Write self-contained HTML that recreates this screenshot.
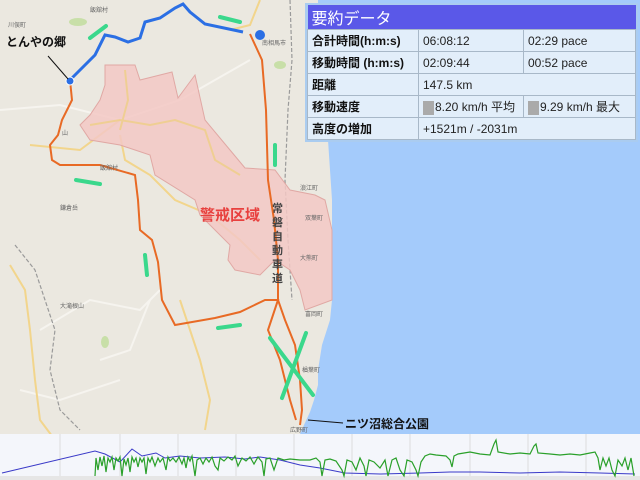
<!DOCTYPE html>
<html><head><meta charset="utf-8"><style>
html,body{margin:0;padding:0;width:640px;height:480px;overflow:hidden;background:#ebe8e0;font-family:"Liberation Sans","Noto Sans CJK JP",sans-serif}
#map{position:absolute;left:0;top:0}
#tbl{position:absolute;left:305px;top:3px;width:333px;height:139px;background:#aaccf0;}
table{position:absolute;left:2px;top:2px;border-collapse:collapse;width:329px;font-size:12px;}
td{border:1px solid #a8b8c8;background:#e2eefa;height:21px;padding:0 4px;color:#222;white-space:nowrap}
td.l{font-weight:bold;width:102px;color:#111}
.t{background:#5a58e8;color:#fff;font-size:16px;height:22px;font-weight:normal;border:none}
.g{display:inline-block;width:11px;height:14px;background:#aaa;vertical-align:middle;margin-right:1px}
</style></head><body>
<svg id="map" width="640" height="480" viewBox="0 0 640 480">
<rect width="640" height="480" fill="#ebe8e0"/>
<path d="M318,0 L640,0 L640,434 L300,434 L304,425 L310,412 L314,400 L318,385 L318,370 L322,345 L330,320 L332,300 L332,200 L328,140 L318,60 Z" fill="#a4cbfb"/>
<g fill="none" stroke="#f6f4ef" stroke-width="2">
<path d="M0,110 L60,105 L120,120 L180,100 L250,60"/>
<path d="M40,330 L90,300 L140,310 L160,290"/>
<path d="M100,360 L130,350 L150,300"/>
<path d="M20,390 L60,400 L120,380"/>
</g>
<g fill="none" stroke="#f2d58c" stroke-width="2">
<path d="M10,265 L25,290 L30,330 L35,380 L40,420 L55,440"/>
<path d="M120,135 L125,160 L150,175 L175,200 L210,215 L240,240 L260,260"/>
<path d="M30,145 L80,150 L120,120"/>
<path d="M180,300 L190,330 L200,360 L210,400 L205,430"/>
<path d="M230,30 L250,25 L260,0"/>
</g>
<g fill="none" stroke="#9a9a9a" stroke-width="1.2" stroke-dasharray="4,2">
<path d="M290,0 L292,60 L288,110 L285,180 L288,240 L292,300"/>
<path d="M15,245 L35,270 L45,300 L55,330 L50,370 L60,410 L80,430"/>
</g>
<path d="M105,65 L135,65 L140,80 L172,72 L178,98 L195,75 L205,120 L230,150 L245,168 L275,170 L290,190 L315,195 L325,200 L332,230 L332,300 L305,310 L300,290 L290,270 L275,260 L260,275 L235,270 L228,260 L230,245 L215,230 L200,215 L195,200 L155,175 L150,155 L120,145 L90,140 L80,125 L90,115 L100,100 L105,85 Z" fill="#f3c8c4" fill-opacity="0.85" stroke="#e0a8a4" stroke-width="1"/>
<g fill="none" stroke="#efcf86" stroke-width="2" opacity=".8">
<path d="M90,125 L120,120 L150,125 L175,120 L205,130 L215,160 L240,175"/>
<path d="M125,70 L128,100 L120,130"/>
</g>
<ellipse cx="78" cy="22" rx="9" ry="4" fill="#c8dfa8"/>
<ellipse cx="105" cy="342" rx="4" ry="6" fill="#c8dfa8"/>
<ellipse cx="280" cy="65" rx="6" ry="4" fill="#c8dfa8"/>
<path d="M250,34 L262,60 L266,110 L268,180 L274,220 L278,260 L278,300 L285,320 L295,345 L300,380 L302,410 L300,425" fill="none" stroke="#e86a25" stroke-width="2"/>
<path d="M70,80 L72,100 L62,120 L58,135 L50,145 L52,160 L60,165 L100,165 L135,175 L138,200 L140,230 L152,240 L158,262 L162,300 L175,325 L215,318 L240,312 L265,300 L278,300 L268,330 L280,360 L290,400 L296,420" fill="none" stroke="#e86a25" stroke-width="2"/>
<path d="M243,32 L205,24 L190,12 L183,4 L175,8 L160,18 L145,22 L140,38 L128,42 L115,37 L105,35 L95,55 L80,70 L70,80" fill="none" stroke="#2b6fe4" stroke-width="3"/>
<circle cx="70" cy="81" r="4" fill="#2b6fe4" stroke="#fff" stroke-width="1"/>
<circle cx="260" cy="35" r="5" fill="#2b6fe4"/>
<g stroke="#3ad88c" stroke-width="4" stroke-linecap="round" fill="#3ad88c">
<path d="M240,22 L220,17"/><path d="M106,26 L90,38"/><path d="M76,180 L100,184"/><path d="M275,165 L275,145"/>
<path d="M145,255 L147,275"/><path d="M218,328 L240,325"/><path d="M270,338 L313,395"/><path d="M282,398 L306,333"/>
</g>
<g font-size="6" fill="#666">
<text x="8" y="27">川俣町</text><text x="90" y="12">飯舘村</text><text x="262" y="45">南相馬市</text>
<text x="100" y="170">飯舘村</text><text x="60" y="210">鎌倉岳</text><text x="60" y="308">大滝根山</text>
<text x="300" y="190">浪江町</text><text x="305" y="220">双葉町</text><text x="300" y="260">大熊町</text>
<text x="305" y="316">富岡町</text><text x="302" y="372">楢葉町</text><text x="290" y="432">広野町</text><text x="62" y="135">山</text>
</g>
<text x="200" y="220" font-size="15" font-weight="bold" fill="#e8403e">警戒区域</text>
<text x="6" y="46" font-size="12" font-weight="bold" fill="#111">とんやの郷</text>
<line x1="48" y1="56" x2="68" y2="79" stroke="#111" stroke-width="1"/>
<text x="345" y="428" font-size="12" font-weight="bold" fill="#111">ニツ沼総合公園</text>
<line x1="308" y1="420" x2="343" y2="423" stroke="#111" stroke-width="1"/>
<g font-size="11" font-weight="bold" fill="#444"><text x="272" y="212">常</text><text x="272" y="226">磐</text><text x="272" y="240">自</text><text x="272" y="254">動</text><text x="272" y="268">車</text><text x="272" y="282">道</text></g>
<rect x="0" y="434" width="640" height="46" fill="#f4f6fb"/>
<g stroke="#dcdcdc" stroke-width="1"><line x1="60" y1="434" x2="60" y2="476"/><line x1="120" y1="434" x2="120" y2="476"/><line x1="178" y1="434" x2="178" y2="476"/><line x1="236" y1="434" x2="236" y2="476"/><line x1="294" y1="434" x2="294" y2="476"/><line x1="352" y1="434" x2="352" y2="476"/><line x1="410" y1="434" x2="410" y2="476"/><line x1="470" y1="434" x2="470" y2="476"/><line x1="528" y1="434" x2="528" y2="476"/><line x1="586" y1="434" x2="586" y2="476"/></g>
<rect x="0" y="476" width="640" height="4" fill="#e6e6e6"/>
<polyline fill="none" stroke="#3a3ac8" stroke-width="1" points="2,473 95,451 105,454 120,462 132,449 142,456 156,453 165,458 180,456 200,458 225,457 245,459 260,457 280,460 300,465 320,468 345,473 380,474 420,473 450,472 480,472 520,473 560,472 600,473 635,474"/>
<polyline fill="none" stroke="#2aa02a" stroke-width="1.2" points="95,476 96,458 98,470 100,457 102,466 104,456 106,472 108,458 110,462 112,457 114,470 116,458 118,461 120,457 122,476 124,459 126,465 128,458 130,472 132,457 134,462 136,458 138,467 140,458 142,462 144,458 146,474 148,458 150,462 152,457 155,466 158,458 160,462 163,458 166,470 168,457 170,461 173,458 176,462 179,457 182,464 184,458 186,468 188,457 190,461 192,456 195,476 197,460 200,458 203,464 206,458 209,462 212,457 215,466 218,470 220,458 224,461 228,457 232,460 235,456 238,466 242,458 246,461 250,457 254,464 258,457 262,462 264,476 266,459 270,458 274,470 278,458 284,460 290,459 300,460 310,460 316,458 320,462 322,476 325,460 330,459 336,461 342,470 344,476 347,460 352,462 356,470 360,458 364,466 366,476 369,460 374,462 380,468 385,460 388,476 392,460 396,458 400,470 404,476 407,460 412,462 416,470 418,476 421,462 425,456 430,454 436,455 446,456 450,460 452,467 454,456 458,454 470,452 480,454 490,455 494,444 496,440 498,452 510,454 520,453 530,454 534,446 536,444 538,453 550,454 560,455 570,454 580,455 590,453 595,452 598,458 600,470 603,458 606,466 609,458 612,470 615,476 618,460 622,466 625,458 628,470 631,458 634,476"/>
</svg>
<div id="tbl"><table>
<tr><td class="t" colspan="3">要約データ</td></tr>
<tr><td class="l">合計時間(h:m:s)</td><td style="width:96px">06:08:12</td><td>02:29 pace</td></tr>
<tr><td class="l">移動時間 (h:m:s)</td><td>02:09:44</td><td>00:52 pace</td></tr>
<tr><td class="l">距離</td><td colspan="2">147.5 km</td></tr>
<tr><td class="l">移動速度</td><td><span class="g"></span>8.20 km/h 平均</td><td><span class="g"></span>9.29 km/h 最大</td></tr>
<tr><td class="l">高度の増加</td><td colspan="2">+1521m / -2031m</td></tr>
</table></div>
</body></html>
